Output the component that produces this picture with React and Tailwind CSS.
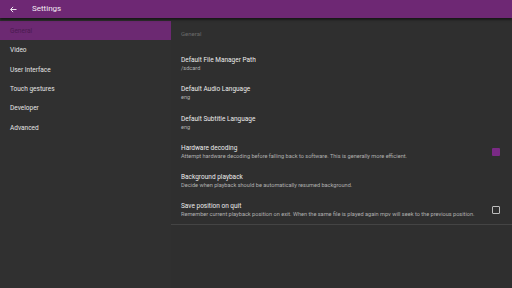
import React from 'react';

const sections = ['General', 'Video', 'User Interface', 'Touch gestures', 'Developer', 'Advanced'];

const prefs = [
  { title: 'Default File Manager Path', summary: '/sdcard' },
  { title: 'Default Audio Language', summary: 'eng' },
  { title: 'Default Subtitle Language', summary: 'eng' },
  {
    title: 'Hardware decoding',
    summary: 'Attempt hardware decoding before falling back to software. This is generally more efficient.',
    check: 'on',
  },
  { title: 'Background playback', summary: 'Decide when playback should be automatically resumed background.' },
  {
    title: 'Save position on quit',
    summary:
      'Remember current playback position on exit. When the same file is played again mpv will seek to the previous position.',
    check: 'off',
  },
];

function Checkbox({ state }) {
  if (state === 'on') {
    return <div className="w-[8px] h-[8px] rounded-[1px] bg-[#7a2a85]"></div>;
  }
  return <div className="w-[8px] h-[8px] rounded-[1px] border border-[#bdbdbd]"></div>;
}

export default function App() {
  return (
    <div className="w-[512px] h-[288px] overflow-hidden bg-[#303030] flex flex-col font-['Roboto',sans-serif]">
      {/* Toolbar */}
      <div className="h-[18px] bg-[#6e2874] flex items-center shadow-[0_2px_2px_rgba(0,0,0,0.5)] relative z-10">
        <svg width="9" height="9" viewBox="0 0 24 24" className="ml-[9px]" fill="none" stroke="#f3e9f5" strokeWidth="2.6">
          <path d="M20 12H5M11 5l-7 7 7 7" />
        </svg>
        <span className="ml-[14px] text-[8px] text-[#f2eaf3] leading-none">Settings</span>
      </div>

      <div className="flex flex-1 pt-[3px]">
        {/* Sidebar */}
        <div className="w-[171px] flex flex-col">
          {sections.map((s, i) => (
            <div
              key={s}
              className={
                i === 0
                  ? 'h-[19.4px] flex items-center pl-[10px] pt-[2px] bg-[#6c2972] text-[6.5px] text-[#4a1b50]'
                  : 'h-[19.4px] flex items-center pl-[10px] pt-[2px] text-[6.5px] text-[#e4e4e4]'
              }
            >
              {s}
            </div>
          ))}
        </div>

        {/* Preferences */}
        <div className="flex-1 bg-[#2f2f2f] flex flex-col">
          <div className="h-[28px] flex items-center pl-[10px] pb-[3px] text-[6px] text-[#6a6a6a]">General</div>
          {prefs.map((p, i) => (
            <div
              key={p.title}
              className={
                i === prefs.length - 1
                  ? 'h-[29.3px] flex items-center pl-[10px] pr-[12px] border-b border-[#444]'
                  : 'h-[29.3px] flex items-center pl-[10px] pr-[12px]'
              }
            >
              <div className="flex-1 flex flex-col gap-[1px]">
                <span className="text-[6.5px] leading-[8px] text-[#ececec]">{p.title}</span>
                <span className="text-[5.6px] leading-[6px] text-[#b0b0b0]">{p.summary}</span>
              </div>
              {p.check && <Checkbox state={p.check} />}
            </div>
          ))}
        </div>
      </div>
    </div>
  );
}
